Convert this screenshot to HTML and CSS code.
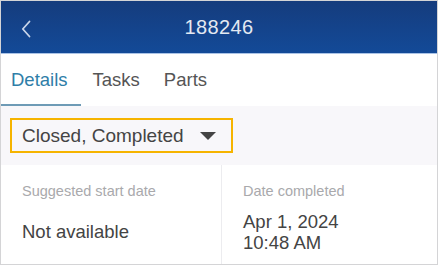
FILE: index.html
```html
<!DOCTYPE html>
<html lang="en">
<head>
    <meta charset="UTF-8">
    <meta name="viewport" content="width=device-width, initial-scale=1.0">
    <title>188246</title>
    <link rel="stylesheet" href="styles.css">
</head>
<body>
    <div class="screen">
        <header class="topbar">
            <a href="#" class="back" aria-label="Back">
                <svg width="10" height="18" viewBox="0 0 10 18">
                    <path d="M8.5 1.5 L1.8 9 L8.5 16.5" fill="none" stroke="#c9d5e9" stroke-width="1.8" stroke-linecap="round" stroke-linejoin="round"/>
                </svg>
            </a>
            <h1>188246</h1>
        </header>

        <nav class="tabs">
            <a href="#" class="tab active">Details</a>
            <a href="#" class="tab">Tasks</a>
            <a href="#" class="tab">Parts</a>
        </nav>

        <div class="status-band">
            <div class="status-select">
                <span>Closed, Completed</span>
                <span class="caret"></span>
            </div>
        </div>

        <div class="fields">
            <div class="field">
                <div class="field-label">Suggested start date</div>
                <div class="field-value">Not available</div>
            </div>
            <div class="field">
                <div class="field-label">Date completed</div>
                <div class="field-value">Apr 1, 2024<br>10:48 AM</div>
            </div>
        </div>
    </div>
</body>
</html>
```

FILE: styles.css
```css
body {
    margin: 0;
    font-family: "Liberation Sans", Arial, sans-serif;
}
.screen {
    width: 438px;
    height: 265px;
    box-sizing: border-box;
    border: 1px solid #d4d4d6;
    display: flex;
    flex-direction: column;
    overflow: hidden;
    background: #fff;
}
.topbar {
    height: 52px;
    flex-shrink: 0;
    display: flex;
    align-items: center;
    justify-content: center;
    position: relative;
    background: linear-gradient(#153c7d, #134a98);
    border-bottom: 1px solid #aac3e6;
}
.topbar h1 {
    margin: 0;
    font-size: 20px;
    font-weight: normal;
    color: #e3e9f2;
    letter-spacing: 0.4px;
}
.back {
    position: absolute;
    left: 20px;
    top: 19px;
    display: flex;
}
.tabs {
    height: 52px;
    flex-shrink: 0;
    display: flex;
    align-items: stretch;
}
.tab {
    display: flex;
    align-items: center;
    padding: 2px 12px 0;
    font-size: 18.5px;
    color: #555;
    text-decoration: none;
    border-bottom: 2px solid transparent;
}
.tab:first-child {
    padding-left: 10px;
    padding-right: 13px;
}
.tab.active {
    color: #2f7ea8;
    border-bottom-color: #6e9bb6;
}
.status-band {
    height: 59px;
    flex-shrink: 0;
    box-sizing: border-box;
    padding: 12px 0 0 9px;
    background: #f8f7fa;
}
.status-select {
    width: 223px;
    height: 35px;
    box-sizing: border-box;
    border: 2px solid #f6b400;
    display: flex;
    align-items: center;
    justify-content: space-between;
    padding: 0 15px 0 10px;
    font-size: 19px;
    color: #444;
}
.caret {
    width: 0;
    height: 0;
    border-left: 8px solid transparent;
    border-right: 8px solid transparent;
    border-top: 8px solid #444;
}
.fields {
    flex: 1;
    display: grid;
    grid-template-columns: 220px 1fr;
}
.field {
    display: flex;
    flex-direction: column;
    padding: 18px 0 0 21px;
}
.field + .field {
    border-left: 1px solid #ececef;
}
.field-label {
    font-size: 14.5px;
    color: #a9a9ac;
}
.field-value {
    flex: 1;
    display: flex;
    align-items: center;
    font-size: 18.5px;
    line-height: 21px;
    color: #444;
}
```
